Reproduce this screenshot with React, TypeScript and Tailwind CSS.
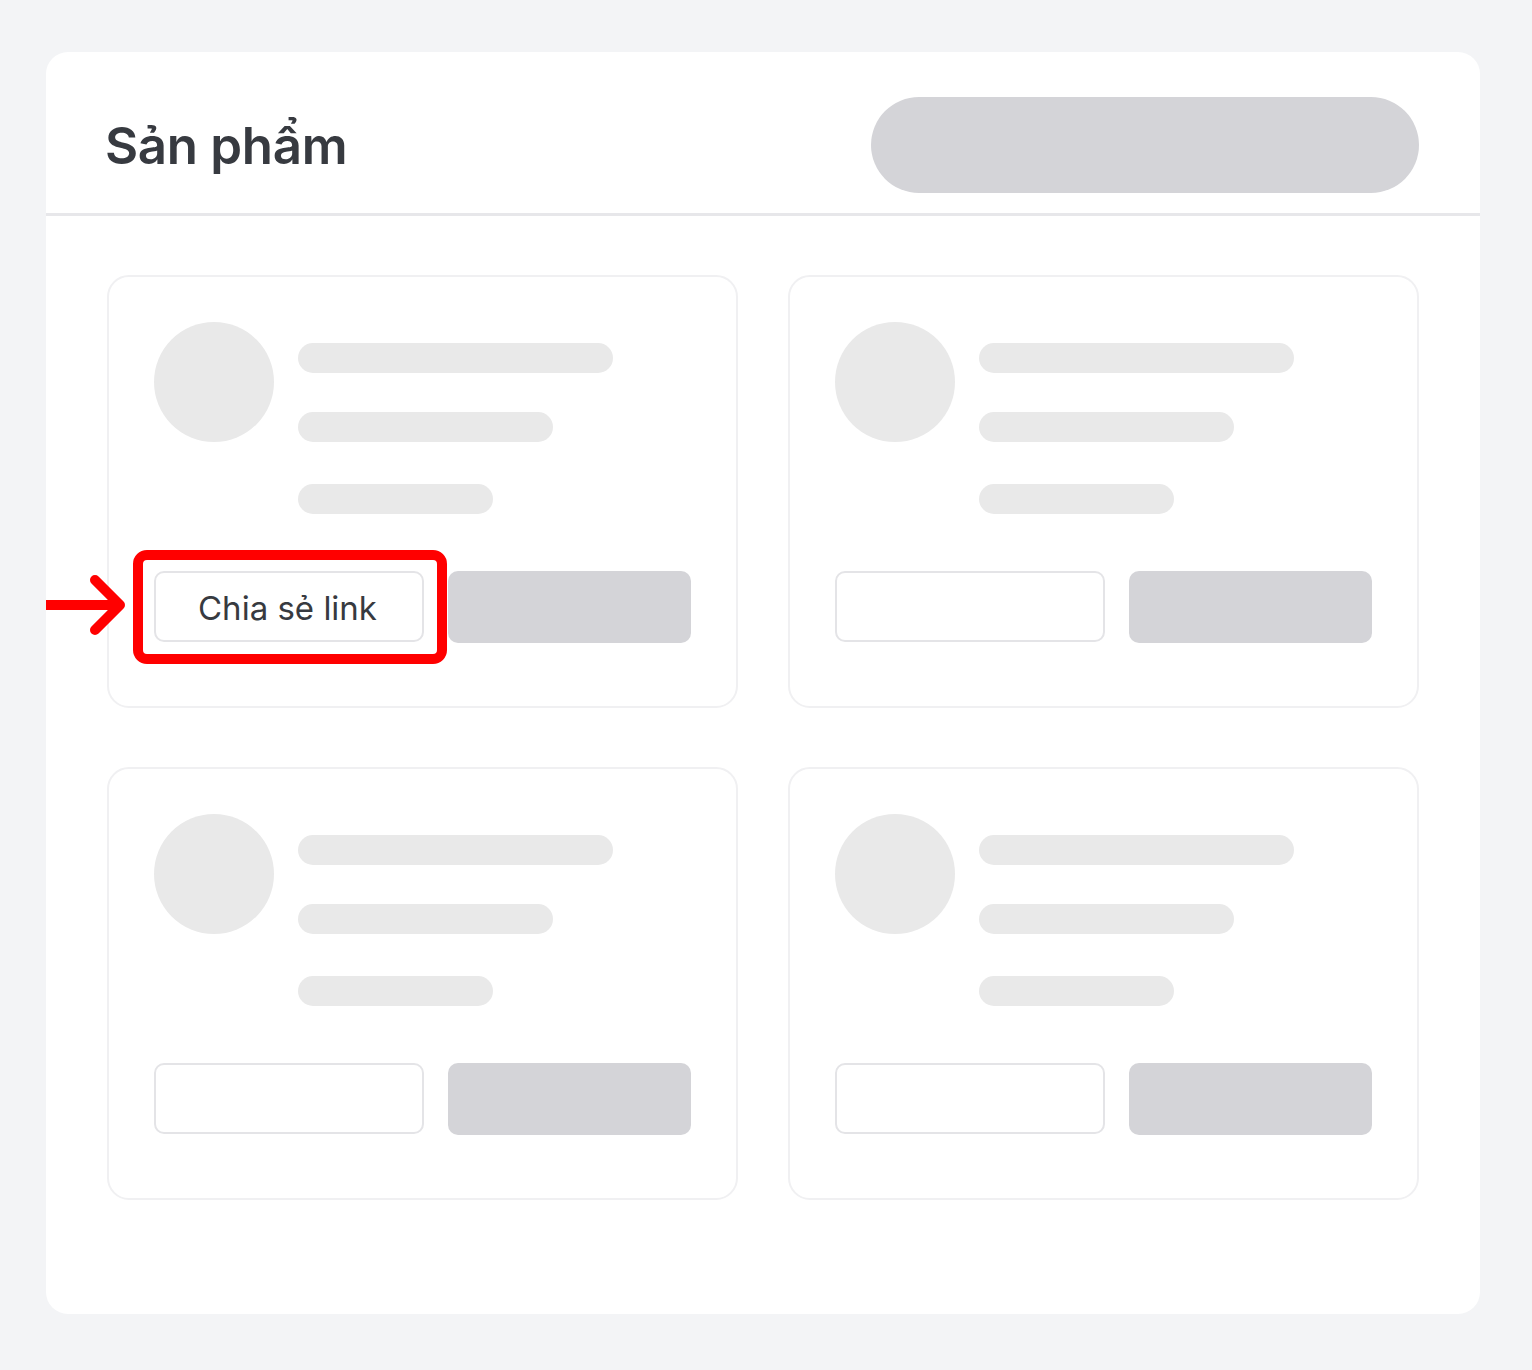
import React from "react";

// Skeleton product card – the first one carries the highlighted "Chia sẻ link" button
function ProductCard({ highlighted = false }: { highlighted?: boolean }) {
  return (
    <div className="h-[433px] rounded-[22px] border-2 border-[#f0f0f2] p-[45px] flex flex-col">
      <div className="flex gap-[24px]">
        <div className="w-[120px] h-[120px] rounded-full bg-[#e9e9e9] shrink-0" />
        <div className="flex flex-col">
          <div className="mt-[21px] h-[30px] w-[315px] rounded-full bg-[#e9e9e9]" />
          <div className="mt-[39px] h-[30px] w-[255px] rounded-full bg-[#e9e9e9]" />
          <div className="mt-[42px] h-[30px] w-[195px] rounded-full bg-[#e9e9e9]" />
        </div>
      </div>

      <div className="mt-[57px] flex gap-[24px]">
        <div className="relative">
          <div className="w-[270px] h-[71px] rounded-[10px] border-2 border-[#e4e4e7] bg-white flex items-center justify-center">
            {highlighted && (
              <span className="pt-[3px] pr-[3px] text-[33px] leading-none text-[#373a40]">
                Chia sẻ link
              </span>
            )}
          </div>
          {highlighted && (
            <>
              {/* khung đỏ đánh dấu */}
              <div className="absolute -left-[21px] -right-[23px] -top-[21px] -bottom-[21px] rounded-[14px] border-[10px] border-[#ff0000] pointer-events-none" />
              {/* mũi tên chỉ vào nút */}
              <svg
                className="absolute -left-[108px] -top-[1px]"
                width="84"
                height="70"
                viewBox="0 0 84 70"
                fill="none"
              >
                <path d="M0 35 H74" stroke="#ff0000" strokeWidth="10" />
                <path
                  d="M49 10 L74 35 L49 60"
                  stroke="#ff0000"
                  strokeWidth="10"
                  strokeLinecap="round"
                  strokeLinejoin="round"
                />
              </svg>
            </>
          )}
        </div>
        <div className="w-[243px] h-[72px] rounded-[10px] bg-[#d4d4d8]" />
      </div>
    </div>
  );
}

export default function App() {
  return (
    <div className="h-[1370px] bg-[#f3f4f6] pt-[52px] pl-[46px] font-['Inter',sans-serif]">
      <div className="w-[1434px] h-[1262px] bg-white rounded-[22px]">
        {/* Header */}
        <div className="flex items-center justify-between pt-[45px] pb-[20px] pl-[59px] pr-[61px] border-b-[3px] border-[#e7e7ea]">
          <h1 className="text-[51px] leading-none font-semibold text-[#373a40] tracking-[-0.3px]">
            Sản phẩm
          </h1>
          <div className="w-[548px] h-[96px] rounded-full bg-[#d4d4d8]" />
        </div>

        {/* Grid */}
        <div className="grid grid-cols-2 gap-x-[50px] gap-y-[59px] px-[61px] pt-[59px]">
          <ProductCard highlighted />
          <ProductCard />
          <ProductCard />
          <ProductCard />
        </div>
      </div>
    </div>
  );
}
